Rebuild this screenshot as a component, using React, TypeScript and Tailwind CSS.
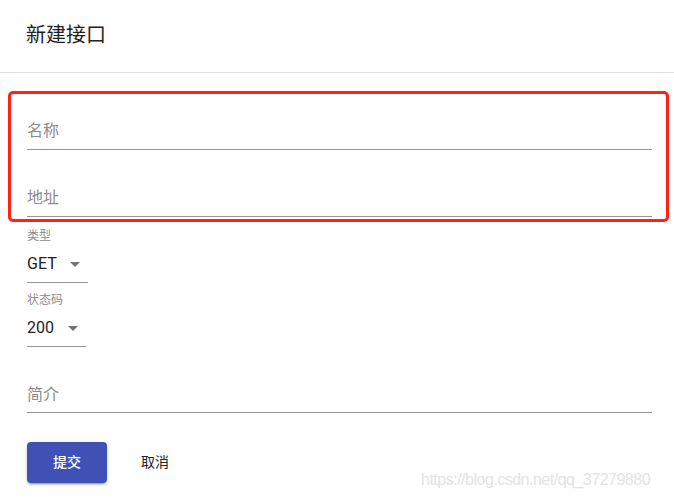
const font = { fontFamily: 'Roboto, "Noto Sans CJK SC", sans-serif' };

function TextField({ label, className }: { label: string; className: string }) {
  return (
    <div className={`border-b border-[#949494] ${className}`}>
      <div className="h-5 text-[16px] leading-5 text-[#8c8c8c]">{label}</div>
    </div>
  );
}

function Select({ label, value, width, className }: { label: string; value: string; width: string; className: string }) {
  return (
    <div className={className}>
      <div className="h-4 text-[12px] leading-4 text-[#8c8c8c]">{label}</div>
      <div className={`mt-[10px] flex items-center justify-between border-b border-[#949494] pb-2 ${width}`}>
        <span className="h-5 text-[16px] leading-5 text-[#212121]">{value}</span>
        <svg width="10" height="5" viewBox="0 0 10 5" className="mr-[8px]">
          <path d="M0 0 L10 0 L5 5 Z" fill="#757575" />
        </svg>
      </div>
    </div>
  );
}

export default function App() {
  return (
    <div className="relative h-[498px] w-[674px] overflow-hidden bg-white" style={font}>
      <div className="flex h-[73px] items-center border-b border-[#e0e0e0] pl-[26px] pb-[2px]">
        <h2 className="text-[20px] font-normal text-[#212121]">新建接口</h2>
      </div>

      <div className="pl-[27px] pr-[22px]">
        <TextField label="名称" className="mt-[48px] pb-2" />
        <TextField label="地址" className="mt-[38px] pb-2" />
        <Select label="类型" value="GET" width="w-[61px]" className="mt-[11px]" />
        <Select label="状态码" value="200" width="w-[59px]" className="mt-[9px]" />
        <TextField label="简介" className="mt-[38px] pb-[7px]" />

        <div className="mt-[29px] flex items-center">
          <button className="h-[41px] w-[80px] rounded-[4px] bg-[#3f51b5] text-[14px] font-medium text-white shadow-[0_3px_1px_-2px_rgba(0,0,0,0.2),0_2px_2px_0_rgba(0,0,0,0.14),0_1px_5px_0_rgba(0,0,0,0.12)]">
            提交
          </button>
          <button className="ml-[34px] text-[14px] text-[#212121]">取消</button>
        </div>
      </div>

      {/* red highlight box drawn over the first two fields */}
      <div className="pointer-events-none absolute left-[8px] top-[91px] h-[131px] w-[661px] rounded-[5px] border-[3px] border-[#ff2316]" />

      {/* watermark */}
      <div
        className="pointer-events-none absolute left-[421px] top-[470px] whitespace-nowrap text-[16px] leading-5 tracking-[-0.5px] text-[#e3e3e3]"
        style={{ fontFamily: '"Liberation Sans", Arial, sans-serif' }}
      >
        https://blog.csdn.net/qq_37279880
      </div>
    </div>
  );
}
